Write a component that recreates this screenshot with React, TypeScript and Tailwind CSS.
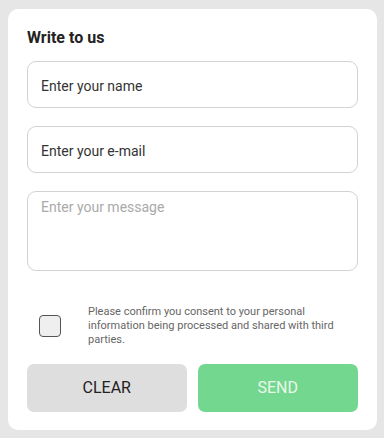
import React from "react";

export default function App() {
  return (
    <div className="w-[384px] h-[438px] bg-[#e6e6e6] pt-[9px] pl-[8px]" style={{ fontFamily: "Roboto, 'Liberation Sans', sans-serif" }}>
      <div className="w-[369px] h-[421px] bg-white rounded-[10px] px-[19px] pt-[17px] flex flex-col">
        <h2 className="text-[16px] leading-[24px] font-bold text-[#222]">Write to us</h2>
        <div className="mt-[11px] flex flex-col gap-[18px]">
          <div className="h-[47px] border border-[#d2d2d2] rounded-[9px] flex items-center px-[13px] pt-[4px] text-[14px] text-[#333]">Enter your name</div>
          <div className="h-[47px] border border-[#d2d2d2] rounded-[9px] flex items-center px-[13px] pt-[4px] text-[14px] text-[#333]">Enter your e-mail</div>
          <div className="h-[80px] border border-[#d2d2d2] rounded-[9px] px-[13px] pt-[6px] text-[14px] leading-[18px] text-[#aaa]">Enter your message</div>
        </div>
        <div className="mt-[34px] flex items-center pl-[12px]">
          <div className="w-[22px] h-[22px] shrink-0 border border-[#555] rounded-[4px] bg-[#efefef]" />
          <p className="ml-[27px] text-[11px] leading-[14px] text-[#666]">
            Please confirm you consent to your personal information being processed and shared with third parties.
          </p>
        </div>
        <div className="mt-[17px] flex gap-[11px]">
          <button className="w-[160px] h-[48px] rounded-[7px] bg-[#dedede] text-[16px] text-[#222]">CLEAR</button>
          <button className="w-[161px] h-[48px] rounded-[7px] bg-[#74d78f] text-[16px] text-[#e8f8ec]">SEND</button>
        </div>
      </div>
    </div>
  );
}
